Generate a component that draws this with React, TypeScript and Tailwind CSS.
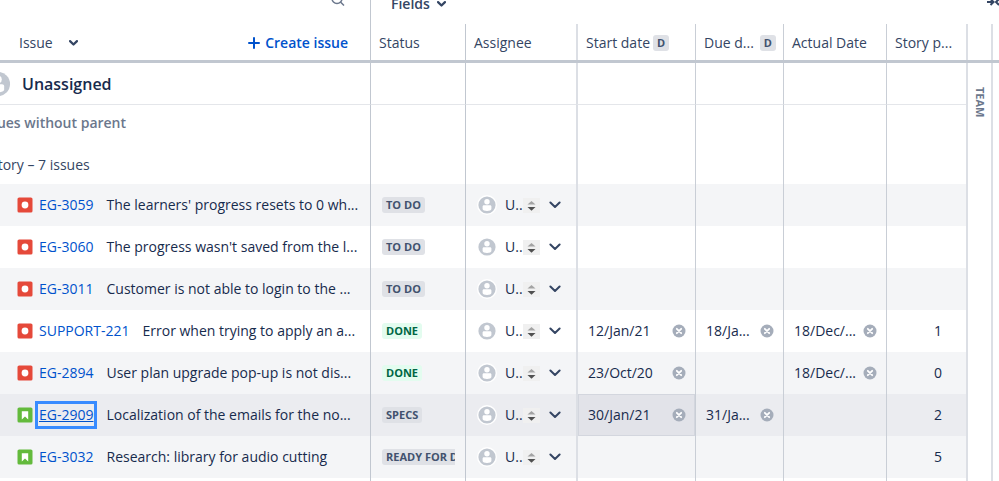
import type { ReactNode } from "react";

interface Issue {
  key: string;
  type: "bug" | "story";
  title: string;
  status: string;
  start?: string;
  due?: string;
  actual?: string;
  points?: number;
  active?: boolean;
}

const issues: Issue[] = [
  { key: "EG-3059", type: "bug", title: "The learners' progress resets to 0 wh...", status: "TO DO" },
  { key: "EG-3060", type: "bug", title: "The progress wasn't saved from the l...", status: "TO DO" },
  { key: "EG-3011", type: "bug", title: "Customer is not able to login to the ...", status: "TO DO" },
  {
    key: "SUPPORT-221",
    type: "bug",
    title: "Error when trying to apply an a...",
    status: "DONE",
    start: "12/Jan/21",
    due: "18/Ja...",
    actual: "18/Dec/...",
    points: 1,
  },
  {
    key: "EG-2894",
    type: "bug",
    title: "User plan upgrade pop-up is not dis...",
    status: "DONE",
    start: "23/Oct/20",
    actual: "18/Dec/...",
    points: 0,
  },
  {
    key: "EG-2909",
    type: "story",
    title: "Localization of the emails for the no...",
    status: "SPECS",
    start: "30/Jan/21",
    due: "31/Ja...",
    points: 2,
    active: true,
  },
  {
    key: "EG-3032",
    type: "story",
    title: "Research: library for audio cutting",
    status: "READY FOR DEV",
    points: 5,
  },
];

// left border of every column after the issue column
const columnBorders = [
  "border-l border-[#c1c7d0]",
  "border-l border-[#c1c7d0]",
  "border-l-2 border-[#dcdfe5]",
  "border-l border-[#c9ced6]",
  "border-l border-[#c9ced6]",
  "border-l border-[#c9ced6]",
];

function Chevron({ className }: { className: string }) {
  return (
    <svg viewBox="0 0 12 8" className={className} fill="none" stroke="currentColor" strokeLinecap="round" strokeLinejoin="round">
      <path d="M1.4 1.5 6 6l4.6-4.5" />
    </svg>
  );
}

function Avatar({ className }: { className: string }) {
  return (
    <svg viewBox="0 0 20 20" className={className}>
      <circle cx="10" cy="10" r="10" fill="#fff" />
      <circle cx="10" cy="10" r="8.6" fill="#c1c7d0" />
      <circle cx="10" cy="6.7" r="2.7" fill="#fff" />
      <path d="M5.6 11.6c0-.9.7-1.4 1.5-1.4h5.8c.8 0 1.5.5 1.5 1.4v2.4c0 1.2-2 1.9-4.4 1.9s-4.4-.7-4.4-1.9z" fill="#fff" />
    </svg>
  );
}

function TypeIcon({ type }: { type: Issue["type"] }) {
  return (
    <svg viewBox="0 0 16 16" className="size-4 shrink-0">
      <rect x="0.5" y="0.5" width="15" height="15" rx="1.6" fill={type === "bug" ? "#e5493a" : "#63ba3c"} />
      {type === "bug" ? (
        <circle cx="8" cy="8" r="3.4" fill="#fff" />
      ) : (
        <path d="M4.8 4.2h6.4v8.2L8 9.6l-3.2 2.8z" fill="#fff" />
      )}
    </svg>
  );
}

function Lozenge({ children }: { children: string }) {
  const color = children === "DONE" ? "bg-[#e3fcef] text-[#006644]" : "bg-[#dfe1e6] text-[#42526e]";
  return (
    <div className="w-[73px] overflow-hidden">
      <span className={`block w-fit rounded-[3px] px-1 text-[11px] leading-4 font-bold whitespace-nowrap ${color}`}>
        {children}
      </span>
    </div>
  );
}

function AssigneePicker() {
  return (
    <button type="button" aria-label="Assignee: unassigned" className="flex w-full items-center pl-[11px]">
      <Avatar className="size-5" />
      <span className="ml-2 w-[18px] text-left">U..</span>
      <svg viewBox="0 0 17 15" className="h-[15px] w-[17px]">
        <rect width="17" height="15" fill="#f0f0f0" />
        <path d="M4.5 6.5 8.5 3l4 3.500z" fill="#a3a3a3" />
        <path d="M4.500 9h8l-4 3.800z" fill="#505050" />
      </svg>
      <Chevron className="ml-[9px] h-2 w-3 stroke-2 text-[#344563]" />
    </button>
  );
}

function DateValue({ value, label }: { value?: string; label: string }) {
  if (!value) return null;
  return (
    <div className="flex items-center justify-between pr-[9px] pl-[10px]">
      <span>{value}</span>
      <button type="button" aria-label={`Clear ${label}`}>
        <svg viewBox="0 0 14 14" className="block size-[14px]">
          <circle cx="7" cy="7" r="6.500" fill="#a5adba" />
          <path d="M4.800 4.800l4.400 4.400M9.200 4.800 4.800 9.200" stroke="#fff" strokeWidth="1.800" strokeLinecap="round" />
        </svg>
      </button>
    </div>
  );
}

function HeaderCell({ column, children }: { column: number; children: ReactNode }) {
  return (
    <th className={`h-9 p-0 text-left font-normal whitespace-nowrap ${columnBorders[column]}`}>
      <div className="flex items-center pt-[2px] pl-2">{children}</div>
    </th>
  );
}

function DateBadge() {
  return (
    <span className="h-4 w-4 rounded-[3px] bg-[#dfe1e6] text-center text-[11px] leading-4 font-bold text-[#42526e]">D</span>
  );
}

function EmptyCells({ className = "" }: { className?: string }) {
  return (
    <>
      {columnBorders.map((border, i) => (
        <td key={i} className={`p-0 ${border}`}>
          <div className={className} />
        </td>
      ))}
    </>
  );
}

function IssueRow({ issue, striped }: { issue: Issue; striped: boolean }) {
  const background = issue.active ? "bg-[#ebecf0]" : striped ? "bg-[#f4f5f7]" : "bg-white";
  return (
    <tr className={`h-[42px] ${background}`}>
      <td className="p-0">
        <div className="flex items-center pl-[17px] whitespace-nowrap">
          <TypeIcon type={issue.type} />
          <a
            href={`#${issue.key}`}
            className={`ml-[6px] text-[#0052cc] ${issue.active ? "underline outline-3 outline-offset-1 outline-[#388bff]" : ""}`}
          >
            {issue.key}
          </a>
          <span className="ml-[13px]">{issue.title}</span>
        </div>
      </td>
      <td className={`p-0 pl-[11px] ${columnBorders[0]}`}>
        <Lozenge>{issue.status}</Lozenge>
      </td>
      <td className={`p-0 ${columnBorders[1]}`}>
        <AssigneePicker />
      </td>
      <td className={`p-0 ${columnBorders[2]} ${issue.active ? "bg-[#e2e3e9] inset-ring inset-ring-[#d3d6de]" : ""}`}>
        <DateValue value={issue.start} label="start date" />
      </td>
      <td className={`p-0 ${columnBorders[3]}`}>
        <DateValue value={issue.due} label="due date" />
      </td>
      <td className={`p-0 ${columnBorders[4]}`}>
        <DateValue value={issue.actual} label="actual date" />
      </td>
      <td className={`p-0 pr-6 text-right ${columnBorders[5]}`}>{issue.points}</td>
    </tr>
  );
}

export default function App() {
  return (
    <div className="flex h-screen flex-col overflow-hidden bg-white font-['Open_Sans','Noto_Sans',sans-serif] text-[14px] leading-5 text-[#172b4d]">
      <div className="flex h-6 shrink-0 text-[#344563]">
        <div className="flex flex-1 justify-end pr-[25px]">
          <button type="button" aria-label="Search issues" className="-mt-[10px] h-4">
            <svg viewBox="0 0 16 16" className="size-4" fill="none" stroke="#6b778c" strokeWidth="1.500">
              <circle cx="8" cy="8.500" r="5" />
              <path d="m11.500 12 3.500 3.500" />
            </svg>
          </button>
        </div>
        <div className="flex w-[629px] items-start justify-between border-l border-[#c1c7d0] pl-5">
          <button type="button" className="-mt-[6px] flex items-center gap-[7px] font-semibold">
            Fields
            <Chevron className="h-[6px] w-[9px] stroke-3" />
          </button>
          <button type="button" aria-label="Collapse fields" className="-mt-1">
            <svg viewBox="0 0 12 12" className="size-3" fill="none" stroke="currentColor" strokeWidth="2">
              <path d="M0 6h6.500M3.500 3l3 3-3 3M12 3 9 6l3 3" />
            </svg>
          </button>
        </div>
      </div>

      <div className="flex min-h-0 flex-1">
        <div className="min-w-0 flex-1">
          <table className="w-full table-fixed border-separate border-spacing-0">
            <colgroup>
              <col />
              <col className="w-[95px]" />
              <col className="w-[111px]" />
              <col className="w-[119px]" />
              <col className="w-[88px]" />
              <col className="w-[103px]" />
              <col className="w-[80px]" />
            </colgroup>
            <thead className="text-[#344563]">
              <tr>
                <th className="h-9 p-0 font-normal">
                  <div className="flex items-center justify-between pt-[2px] pr-[22px] pl-[19px]">
                    <button type="button" className="flex items-center gap-4 font-medium">
                      Issue
                      <Chevron className="h-[6px] w-[9px] stroke-3" />
                    </button>
                    <button type="button" className="flex items-center gap-[5px] font-semibold text-[#0052cc]">
                      <svg viewBox="0 0 12 12" className="size-3" stroke="currentColor" strokeWidth="2" strokeLinecap="round">
                        <path d="M6 1v10M1 6h10" />
                      </svg>
                      Create issue
                    </button>
                  </div>
                </th>
                <HeaderCell column={0}>Status</HeaderCell>
                <HeaderCell column={1}>Assignee</HeaderCell>
                <HeaderCell column={2}>
                  <span className="mr-[3px]">Start date</span>
                  <DateBadge />
                </HeaderCell>
                <HeaderCell column={3}>
                  <span className="mr-[6px]">Due d...</span>
                  <DateBadge />
                </HeaderCell>
                <HeaderCell column={4}>Actual Date</HeaderCell>
                <HeaderCell column={5}>Story p...</HeaderCell>
              </tr>
              <tr>
                <td colSpan={7} className="h-[3px] bg-[#c1c7d0] p-0" />
              </tr>
            </thead>
            <tbody>
              <tr className="h-[42px] *:border-b *:border-b-[#e4e6ea]">
                <td className="p-0">
                  <div className="-ml-4 flex items-center gap-[10px] text-[16px] font-semibold">
                    <Avatar className="size-7" />
                    Unassigned
                  </div>
                </td>
                <EmptyCells />
              </tr>
              <tr className="h-9">
                <td className="p-0">
                  <div className="-ml-[21px] font-semibold whitespace-nowrap text-[#6b778c]">Issues without parent</div>
                </td>
                <EmptyCells />
              </tr>
              <tr className="h-[43px]">
                <td className="p-0 pt-[5px]">
                  <div className="-ml-[10px] whitespace-nowrap text-[#344563]">Story – 7 issues</div>
                </td>
                <EmptyCells />
              </tr>
              {issues.map((issue, i) => (
                <IssueRow key={issue.key} issue={issue} striped={i % 2 === 0} />
              ))}
              <tr>
                <td className="p-0" />
                <EmptyCells className="h-10" />
              </tr>
            </tbody>
          </table>
        </div>

        <aside className="flex w-[33px] shrink-0 flex-col">
          <div className="flex h-[39px] shrink-0 border-b-3 border-[#c1c7d0]">
            <div className="w-[25px] border-l-2 border-[#dcdfe5]" />
            <div className="flex-1 border-l-2 border-[#dcdfe5]" />
          </div>
          <div className="flex flex-1">
            <div className="flex w-[25px] justify-center border-l-2 border-[#dcdfe5] pt-6">
              <span className="text-[11px] leading-4 font-bold text-[#6b778c] [writing-mode:vertical-rl]">TEAM</span>
            </div>
            <div className="flex-1 border-l-2 border-[#dcdfe5]" />
          </div>
        </aside>
      </div>
    </div>
  );
}
